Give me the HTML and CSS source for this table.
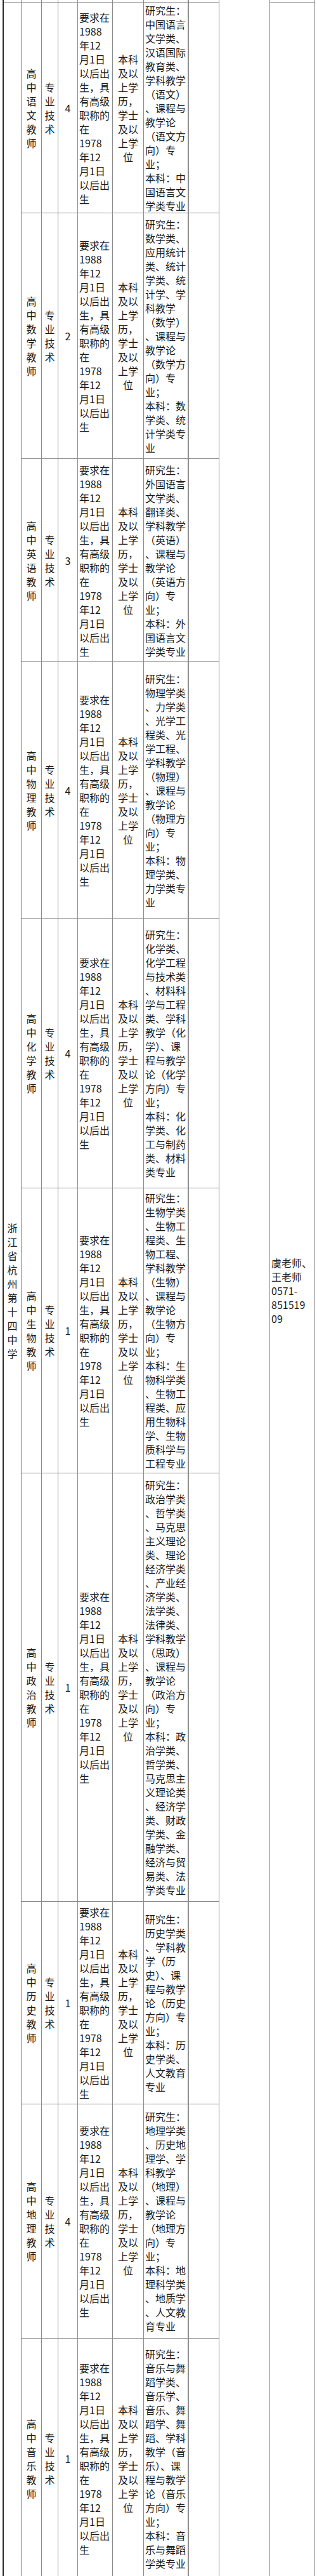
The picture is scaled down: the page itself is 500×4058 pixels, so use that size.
FILE: index.html
```html
<!DOCTYPE html>
<html lang="zh-CN">
<head>
<meta charset="utf-8">
<title>浙江省杭州第十四中学 招聘岗位</title>
<link rel="stylesheet" href="styles.css">
</head>
<body>
<div class="page">
<div class="sheet">
  <!-- tail of the previous row -->
  <div class="cell stub"></div>
  <div class="cell stub"></div>
  <div class="cell stub"></div>
  <div class="cell stub"></div>
  <div class="cell stub"></div>
  <div class="cell stub"></div>
  <div class="cell stub major-col"></div>
  <div class="cell stub"></div>
  <div class="cell blank9"></div>
  <div class="cell stub"></div>

  <!-- row 1 -->
  <div class="cell school">浙江省杭州第十四中学</div>
  <div class="cell title">高中语文教师</div>
  <div class="cell kind">专业技术</div>
  <div class="cell num">4</div>
  <div class="cell left lines"><span>要求在</span><span>1988</span><span>年12</span><span>月1日</span><span>以后出</span><span>生，具</span><span>有高级</span><span>职称的</span><span>在</span><span>1978</span><span>年12</span><span>月1日</span><span>以后出</span><span>生</span></div>
  <div class="cell lines"><span>本科</span><span>及以</span><span>上学</span><span>历，</span><span>学士</span><span>及以</span><span>上学</span><span>位</span></div>
  <div class="cell left lines major-col"><span>研究生：</span><span>中国语言</span><span>文学类、</span><span>汉语国际</span><span>教育类、</span><span>学科教学</span><span>（语文）</span><span>、课程与</span><span>教学论</span><span>（语文方</span><span>向）专</span><span>业；</span><span>本科：中</span><span>国语言文</span><span>学类专业</span></div>
  <div class="cell"></div>
  <div class="cell contact lines"><span>虞老师、</span><span>王老师</span><span>0571-</span><span>851519</span><span>09</span></div>

  <!-- row 2 -->
  <div class="cell title">高中数学教师</div>
  <div class="cell kind">专业技术</div>
  <div class="cell num">2</div>
  <div class="cell left lines"><span>要求在</span><span>1988</span><span>年12</span><span>月1日</span><span>以后出</span><span>生，具</span><span>有高级</span><span>职称的</span><span>在</span><span>1978</span><span>年12</span><span>月1日</span><span>以后出</span><span>生</span></div>
  <div class="cell lines"><span>本科</span><span>及以</span><span>上学</span><span>历，</span><span>学士</span><span>及以</span><span>上学</span><span>位</span></div>
  <div class="cell left lines major-col"><span>研究生：</span><span>数学类、</span><span>应用统计</span><span>类、统计</span><span>学类、统</span><span>计学、学</span><span>科教学</span><span>（数学）</span><span>、课程与</span><span>教学论</span><span>（数学方</span><span>向）专</span><span>业；</span><span>本科：数</span><span>学类、统</span><span>计学类专</span><span>业</span></div>
  <div class="cell"></div>

  <!-- row 3 -->
  <div class="cell title">高中英语教师</div>
  <div class="cell kind">专业技术</div>
  <div class="cell num">3</div>
  <div class="cell left lines"><span>要求在</span><span>1988</span><span>年12</span><span>月1日</span><span>以后出</span><span>生，具</span><span>有高级</span><span>职称的</span><span>在</span><span>1978</span><span>年12</span><span>月1日</span><span>以后出</span><span>生</span></div>
  <div class="cell lines"><span>本科</span><span>及以</span><span>上学</span><span>历，</span><span>学士</span><span>及以</span><span>上学</span><span>位</span></div>
  <div class="cell left lines major-col"><span>研究生：</span><span>外国语言</span><span>文学类、</span><span>翻译类、</span><span>学科教学</span><span>（英语）</span><span>、课程与</span><span>教学论</span><span>（英语方</span><span>向）专</span><span>业；</span><span>本科：外</span><span>国语言文</span><span>学类专业</span></div>
  <div class="cell"></div>

  <!-- row 4 -->
  <div class="cell title">高中物理教师</div>
  <div class="cell kind">专业技术</div>
  <div class="cell num">4</div>
  <div class="cell left lines"><span>要求在</span><span>1988</span><span>年12</span><span>月1日</span><span>以后出</span><span>生，具</span><span>有高级</span><span>职称的</span><span>在</span><span>1978</span><span>年12</span><span>月1日</span><span>以后出</span><span>生</span></div>
  <div class="cell lines"><span>本科</span><span>及以</span><span>上学</span><span>历，</span><span>学士</span><span>及以</span><span>上学</span><span>位</span></div>
  <div class="cell left lines major-col"><span>研究生：</span><span>物理学类</span><span>、力学类</span><span>、光学工</span><span>程类、光</span><span>学工程、</span><span>学科教学</span><span>（物理）</span><span>、课程与</span><span>教学论</span><span>（物理方</span><span>向）专</span><span>业；</span><span>本科：物</span><span>理学类、</span><span>力学类专</span><span>业</span></div>
  <div class="cell"></div>

  <!-- row 5 -->
  <div class="cell title">高中化学教师</div>
  <div class="cell kind">专业技术</div>
  <div class="cell num">4</div>
  <div class="cell left lines"><span>要求在</span><span>1988</span><span>年12</span><span>月1日</span><span>以后出</span><span>生，具</span><span>有高级</span><span>职称的</span><span>在</span><span>1978</span><span>年12</span><span>月1日</span><span>以后出</span><span>生</span></div>
  <div class="cell lines"><span>本科</span><span>及以</span><span>上学</span><span>历，</span><span>学士</span><span>及以</span><span>上学</span><span>位</span></div>
  <div class="cell left lines major-col"><span>研究生：</span><span>化学类、</span><span>化学工程</span><span>与技术类</span><span>、材料科</span><span>学与工程</span><span>类、学科</span><span>教学（化</span><span>学）、课</span><span>程与教学</span><span>论（化学</span><span>方向）专</span><span>业；</span><span>本科：化</span><span>学类、化</span><span>工与制药</span><span>类、材料</span><span>类专业</span></div>
  <div class="cell"></div>

  <!-- row 6 -->
  <div class="cell title">高中生物教师</div>
  <div class="cell kind">专业技术</div>
  <div class="cell num">1</div>
  <div class="cell left lines"><span>要求在</span><span>1988</span><span>年12</span><span>月1日</span><span>以后出</span><span>生，具</span><span>有高级</span><span>职称的</span><span>在</span><span>1978</span><span>年12</span><span>月1日</span><span>以后出</span><span>生</span></div>
  <div class="cell lines"><span>本科</span><span>及以</span><span>上学</span><span>历，</span><span>学士</span><span>及以</span><span>上学</span><span>位</span></div>
  <div class="cell left lines major-col"><span>研究生：</span><span>生物学类</span><span>、生物工</span><span>程类、生</span><span>物工程、</span><span>学科教学</span><span>（生物）</span><span>、课程与</span><span>教学论</span><span>（生物方</span><span>向）专</span><span>业；</span><span>本科：生</span><span>物科学类</span><span>、生物工</span><span>程类、应</span><span>用生物科</span><span>学、生物</span><span>质科学与</span><span>工程专业</span></div>
  <div class="cell"></div>

  <!-- row 7 -->
  <div class="cell title">高中政治教师</div>
  <div class="cell kind">专业技术</div>
  <div class="cell num">1</div>
  <div class="cell left lines"><span>要求在</span><span>1988</span><span>年12</span><span>月1日</span><span>以后出</span><span>生，具</span><span>有高级</span><span>职称的</span><span>在</span><span>1978</span><span>年12</span><span>月1日</span><span>以后出</span><span>生</span></div>
  <div class="cell lines"><span>本科</span><span>及以</span><span>上学</span><span>历，</span><span>学士</span><span>及以</span><span>上学</span><span>位</span></div>
  <div class="cell left lines major-col"><span>研究生：</span><span>政治学类</span><span>、哲学类</span><span>、马克思</span><span>主义理论</span><span>类、理论</span><span>经济学类</span><span>、产业经</span><span>济学类、</span><span>法学类、</span><span>法律类、</span><span>学科教学</span><span>（思政）</span><span>、课程与</span><span>教学论</span><span>（政治方</span><span>向）专</span><span>业；</span><span>本科：政</span><span>治学类、</span><span>哲学类、</span><span>马克思主</span><span>义理论类</span><span>、经济学</span><span>类、财政</span><span>学类、金</span><span>融学类、</span><span>经济与贸</span><span>易类、法</span><span>学类专业</span></div>
  <div class="cell"></div>

  <!-- row 8 -->
  <div class="cell title">高中历史教师</div>
  <div class="cell kind">专业技术</div>
  <div class="cell num">1</div>
  <div class="cell left lines"><span>要求在</span><span>1988</span><span>年12</span><span>月1日</span><span>以后出</span><span>生，具</span><span>有高级</span><span>职称的</span><span>在</span><span>1978</span><span>年12</span><span>月1日</span><span>以后出</span><span>生</span></div>
  <div class="cell lines"><span>本科</span><span>及以</span><span>上学</span><span>历，</span><span>学士</span><span>及以</span><span>上学</span><span>位</span></div>
  <div class="cell left lines major-col"><span>研究生：</span><span>历史学类</span><span>、学科教</span><span>学（历</span><span>史）、课</span><span>程与教学</span><span>论（历史</span><span>方向）专</span><span>业；</span><span>本科：历</span><span>史学类、</span><span>人文教育</span><span>专业</span></div>
  <div class="cell"></div>

  <!-- row 9 -->
  <div class="cell title">高中地理教师</div>
  <div class="cell kind">专业技术</div>
  <div class="cell num">4</div>
  <div class="cell left lines"><span>要求在</span><span>1988</span><span>年12</span><span>月1日</span><span>以后出</span><span>生，具</span><span>有高级</span><span>职称的</span><span>在</span><span>1978</span><span>年12</span><span>月1日</span><span>以后出</span><span>生</span></div>
  <div class="cell lines"><span>本科</span><span>及以</span><span>上学</span><span>历，</span><span>学士</span><span>及以</span><span>上学</span><span>位</span></div>
  <div class="cell left lines major-col"><span>研究生：</span><span>地理学类</span><span>、历史地</span><span>理学、学</span><span>科教学</span><span>（地理）</span><span>、课程与</span><span>教学论</span><span>（地理方</span><span>向）专</span><span>业；</span><span>本科：地</span><span>理科学类</span><span>、地质学</span><span>、人文教</span><span>育专业</span></div>
  <div class="cell"></div>

  <!-- row 10 -->
  <div class="cell title">高中音乐教师</div>
  <div class="cell kind">专业技术</div>
  <div class="cell num">1</div>
  <div class="cell left lines"><span>要求在</span><span>1988</span><span>年12</span><span>月1日</span><span>以后出</span><span>生，具</span><span>有高级</span><span>职称的</span><span>在</span><span>1978</span><span>年12</span><span>月1日</span><span>以后出</span><span>生</span></div>
  <div class="cell lines"><span>本科</span><span>及以</span><span>上学</span><span>历，</span><span>学士</span><span>及以</span><span>上学</span><span>位</span></div>
  <div class="cell left lines major-col"><span>研究生：</span><span>音乐与舞</span><span>蹈学类、</span><span>音乐学、</span><span>音乐、舞</span><span>蹈学、舞</span><span>蹈、学科</span><span>教学（音</span><span>乐）、课</span><span>程与教学</span><span>论（音乐</span><span>方向）专</span><span>业；</span><span>本科：音</span><span>乐与舞蹈</span><span>学类专业</span></div>
  <div class="cell"></div>
</div>
</div>
</body>
</html>
```
FILE: styles.css
```css
html, body {
  margin: 0;
  padding: 0;
  background: #ffffff;
}

body {
  font-family: "Noto Sans CJK SC", "Microsoft YaHei", "Noto Sans", sans-serif;
  font-size: 16px;
  line-height: 22px;
  color: #1a1a1a;
}

.page {
  width: 500px;
  height: 4058px;
  overflow: hidden;
}

.sheet {
  margin-left: 4px;
  width: 493px;
  box-sizing: border-box;
  border-left: 2px solid #2a2a2a;
  display: grid;
  grid-template-columns: 28px 32px 26px 31px 55px 49px 71px 48px 80px 71px;
  grid-template-rows: 4px 332px 387px 320px 404px 425px 449px 675px 319px 369px 378px;
}

.cell {
  box-sizing: border-box;
  min-width: 0;
  overflow: hidden;
  border-right: 1px solid #8a8a8a;
  border-bottom: 1px solid #8a8a8a;
  display: flex;
  flex-direction: column;
  justify-content: center;
  align-items: center;
  text-align: center;
}

.major-col {
  border-right: 2px solid #8f8f8f;
}

.blank9 {
  grid-row: span 11;
  border-bottom: none;
}

.school {
  grid-row: span 10;
  padding: 0 4px;
  word-break: break-all;
}

.title,
.kind {
  word-break: break-all;
  padding: 0 1px;
}

.contact {
  grid-row: span 10;
  align-items: flex-start;
  text-align: left;
  padding-left: 2px;
}

.left {
  align-items: flex-start;
  text-align: left;
  padding-left: 2px;
}

.lines span {
  display: block;
  white-space: nowrap;
}
```
